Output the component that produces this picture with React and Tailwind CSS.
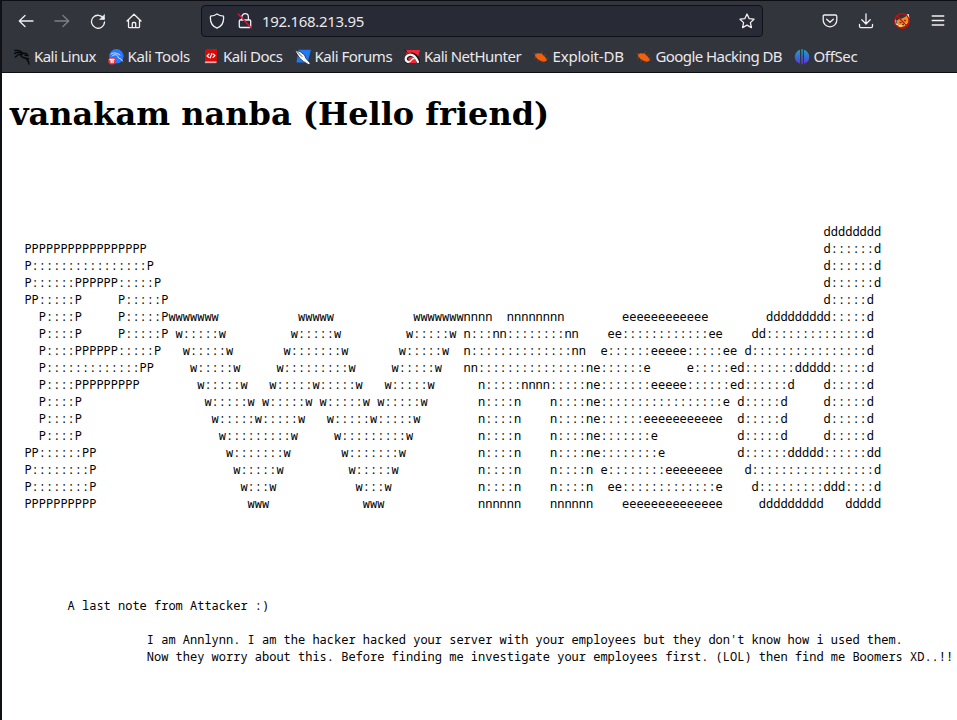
const FONT = "font-['Noto_Sans','Open_Sans',sans-serif]";

// Each banner row is a list of [column, text] runs.
const banner = [
  [[113, "dddddddd"]],
  [[2, "PPPPPPPPPPPPPPPPP"], [113, "d::::::d"]],
  [[2, "P::::::::::::::::P"], [113, "d::::::d"]],
  [[2, "P::::::PPPPPP:::::P"], [113, "d::::::d"]],
  [[2, "PP:::::P"], [15, "P:::::P"], [113, "d:::::d"]],
  [[4, "P::::P"], [15, "P:::::P"], [22, "wwwwwww"], [40, "wwwww"], [56, "wwwwwwwnnnn"], [69, "nnnnnnnn"], [85, "eeeeeeeeeeee"], [105, "ddddddddd:::::d"]],
  [[4, "P::::P"], [15, "P:::::P"], [23, "w:::::w"], [39, "w:::::w"], [55, "w:::::w"], [63, "n:::nn::::::::nn"], [83, "ee::::::::::::ee"], [103, "dd::::::::::::::d"]],
  [[4, "P::::PPPPPP:::::P"], [24, "w:::::w"], [38, "w:::::::w"], [54, "w:::::w"], [63, "n::::::::::::::nn"], [82, "e::::::eeeee:::::ee"], [102, "d::::::::::::::::d"]],
  [[4, "P:::::::::::::PP"], [25, "w:::::w"], [37, "w:::::::::w"], [53, "w:::::w"], [63, "nn:::::::::::::::n"], [81, "e::::::e"], [94, "e:::::e"], [101, "d:::::::ddddd:::::d"]],
  [[4, "P::::PPPPPPPPP"], [26, "w:::::w"], [36, "w:::::w:::::w"], [52, "w:::::w"], [65, "n:::::nnnn:::::n"], [81, "e:::::::eeeee::::::e"], [101, "d::::::d"], [113, "d:::::d"]],
  [[4, "P::::P"], [27, "w:::::w"], [35, "w:::::w"], [43, "w:::::w"], [51, "w:::::w"], [65, "n::::n"], [75, "n::::n"], [81, "e:::::::::::::::::e"], [101, "d:::::d"], [113, "d:::::d"]],
  [[4, "P::::P"], [28, "w:::::w:::::w"], [44, "w:::::w:::::w"], [65, "n::::n"], [75, "n::::n"], [81, "e::::::eeeeeeeeeee"], [101, "d:::::d"], [113, "d:::::d"]],
  [[4, "P::::P"], [29, "w:::::::::w"], [45, "w:::::::::w"], [65, "n::::n"], [75, "n::::n"], [81, "e:::::::e"], [101, "d:::::d"], [113, "d:::::d"]],
  [[2, "PP::::::PP"], [30, "w:::::::w"], [46, "w:::::::w"], [65, "n::::n"], [75, "n::::n"], [81, "e::::::::e"], [101, "d::::::ddddd::::::dd"]],
  [[2, "P::::::::P"], [31, "w:::::w"], [47, "w:::::w"], [65, "n::::n"], [75, "n::::n"], [82, "e::::::::eeeeeeee"], [102, "d:::::::::::::::::d"]],
  [[2, "P::::::::P"], [32, "w:::w"], [48, "w:::w"], [65, "n::::n"], [75, "n::::n"], [83, "ee:::::::::::::e"], [103, "d:::::::::ddd::::d"]],
  [[2, "PPPPPPPPPP"], [33, "www"], [49, "www"], [65, "nnnnnn"], [75, "nnnnnn"], [85, "eeeeeeeeeeeeee"], [104, "ddddddddd"], [116, "ddddd"]],
  [], [], [], [], [],
  [[8, "A last note from Attacker :)"]],
  [],
  [[19, "I am Annlynn. I am the hacker hacked your server with your employees but they don't know how i used them."]],
  [[19, "Now they worry about this. Before finding me investigate your employees first. (LOL) then find me Boomers XD..!!"]],
];

const bannerText = banner
  .map((runs) => runs.reduce((line, [col, text]) => line.padEnd(col) + text, ""))
  .join("\n");

function Glyph({ children, className = "" }) {
  return (
    <svg viewBox="0 0 16 16" fill="none" stroke="#f0f0f2" strokeWidth="1.3" strokeLinecap="round" strokeLinejoin="round" className={`size-4 shrink-0 ${className}`}>
      {children}
    </svg>
  );
}

function Bug() {
  return (
    <g stroke="none">
      <path d="M2 5.2 4.5 4.2 7 4.6 8.5 4.2 10 6 12.6 8.4 14 11.5 11 12.8 8 12 4.5 10 2.2 7.5Z" fill="#f1600d" />
      <path d="M3 5 .8 4.6M3.5 8.5 1.5 9.5M6 11 4.8 12.5M8 4.5 9.5 2.6M10.5 6.5 13 5.5M12.5 9 15 9.3M9.5 12 9.2 13.5" stroke="#8a4524" strokeWidth=".7" />
    </g>
  );
}

const bookmarks = [
  {
    name: "Kali Linux", w: "w-[93.5px]", tw: "tracking-[-0.56px]",
    icon: <g stroke="#08090b" strokeWidth="1.4"><path d="M.8 1.5C4 1 7 2 9 4.5M.5 4.6C3 3 6 3.5 8.5 5M1.5 8C3 6 5 5 8 5.5M8 4 12 4.5 14 6.5 11 6.3M8.5 4.5C5.5 7 8 8.5 11 9 13.5 10 14.5 12 15 15M12 9.5 14.5 9.8" /></g>,
  },
  {
    name: "Kali Tools", w: "w-[95.5px]", tw: "tracking-[-0.35px]",
    icon: <g stroke="none"><circle cx="8.4" cy="7.3" r="7.2" fill="#2777ff" /><path d="M3 5C6 3 9 4 12 6M4 7C7 4.5 10 6 10 8S14 9 14.5 12" stroke="#d8e8ff" strokeWidth="1" /><circle cx="4" cy="11.8" r="3.8" fill="#ed3038" /><path d="M2 10.5h4M3.2 10.5v3M5 10.5v3" stroke="#fff" /></g>,
  },
  {
    name: "Kali Docs", w: "w-[91.5px]", tw: "tracking-[-0.48px]",
    icon: <g stroke="none"><path d="M2 1.5 4 0h10v12.5l-1 2.5H2Z" fill="#dc0909" /><path d="M2.5 13.2H13" stroke="#ddd" strokeWidth="1.3" /><path d="m6 5-2 2 2 1.5M10 5l2 1.5-2 2M8.8 4.5 7.2 9" stroke="#fff" strokeWidth="1.1" /></g>,
  },
  {
    name: "Kali Forums", w: "w-[109.5px]", tw: "tracking-[-0.48px]",
    icon: <g stroke="none"><path d="M3.5.8H16L12.6 13.5H1.5Z" fill="#1f78f5" /><path d="M0 1.5 5 2.5 9.5 6 11 9.5 15.5 14.5 13.5 15.5 8.5 12.5 5 9.5Z" fill="#f5f7fa" stroke="#17202c" strokeWidth=".7" /><path d="m2 2.5 5 5" stroke="#30363f" strokeWidth=".8" /></g>,
  },
  {
    name: "Kali NetHunter", w: "w-[128.5px]", tw: "tracking-[-0.52px]",
    icon: <g stroke="none"><path d="M2.5 1H16l-3.8 13H2Z" fill="#f32636" /><path d="M.8 1 3 3.2" stroke="#141418" strokeWidth="1" /><path d="M3 12.6C.5 9 3.5 5.8 7.5 5.6c3.6 0 5.4 2.6 7 7.2" stroke="#17171b" strokeWidth="4" /><path d="M4 12.8C.6 11.8 1 7 5 5.8c4.6-1 6.8 2 9 7.2" stroke="#f3f3f3" strokeWidth="2.3" /><path d="M4 13c3.6.3 3-3.6 6-3.6" stroke="#f3f3f3" strokeWidth="1.5" /></g>,
  },
  { name: "Exploit-DB", w: "w-[103px]", tw: "tracking-[-0.2px]", icon: <Bug /> },
  { name: "Google Hacking DB", w: "w-[158px]", tw: "tracking-[-0.57px]", icon: <Bug /> },
  {
    name: "OffSec", w: "w-[70px]", tw: "tracking-[-0.35px]",
    icon: <g stroke="none"><defs><linearGradient id="off" x1="0" y1="0" x2="0" y2="1"><stop stopColor="#12a8bd" /><stop offset="1" stopColor="#6230e8" /></linearGradient></defs><path d="M6 .8A7.5 7.5 0 0 0 2.8 13L6 14.8ZM7.3.3h1.5v15H7.3ZM10 .8A7.5 7.5 0 0 1 13.3 13L10 14.8Z" fill="url(#off)" /></g>,
  },
];

export default function App() {
  return (
    <div className="h-[720px] w-[957px] overflow-hidden border-l-2 border-[#101116] bg-white text-black">
      <header className={`h-[73px] border-y border-[#0d0e13] bg-[#33353d] text-[#e9e9eb] ${FONT}`}>
        <div className="flex h-10 items-center">
          <div className="ml-4 flex gap-5">
            <Glyph><path d="M1.3 8H15M7 2.5 1.3 8 7 13.5" /></Glyph>
            <Glyph className="opacity-40"><path d="M1 8h13.7M9 2.5 14.7 8 9 13.5" /></Glyph>
            <Glyph><path d="M13.7 5.6A6.5 6.5 0 1 0 14.5 9" /><path d="M14.5 1.8v4.7H9.8Z" fill="#f0f0f2" strokeWidth=".6" /></Glyph>
            <Glyph><path d="M1 8 8 1.2 15 8M2.5 7v6.7q0 1 1 1h9q1 0 1-1V7M6.3 14.5v-4q0-1 1-1h1.4q1 0 1 1v4" /></Glyph>
          </div>
          <div className="ml-[59px] flex h-8 w-[562px] items-center rounded border border-[#101117] bg-[#282a36] pr-[7px] pl-[7px]">
            <Glyph><path d="M8 1C6 2.5 4 3 1.5 3.2 1 8 2.5 13 8 15.2 13.5 13 15 8 14.5 3.2 12 3 10 2.5 8 1Z" /></Glyph>
            <Glyph className="ml-3"><path d="M4.8 7V4a3.3 3.3 0 0 1 6.6 0v3M3.3 7h9.4q1 0 1 1v5.5q0 1-1 1H3.3q-1 0-1-1V8q0-1 1-1Z" /><path d="m1.3 1 13 14" stroke="#e3113d" /></Glyph>
            <span className="ml-[9px] flex-1 text-[15px] tracking-[-0.32px]">192.168.213.95</span>
            <Glyph><path d="m8 1 2.1 4.6 4.9.6-3.6 3.4 1 5L8 12.1l-4.4 2.5 1-5L1 6.2l4.9-.6Z" /></Glyph>
          </div>
          <div className="ml-[59px] flex items-center gap-5">
            <Glyph><path d="M2.5 2h11q1.3 0 1.3 1.3v4A6.8 6.5 0 0 1 1.2 7.3v-4Q1.2 2 2.5 2ZM4.7 6.2 8 9.3l3.3-3.1" /></Glyph>
            <Glyph><path d="M8 .8v10M3.8 6.8 8 11l4.2-4.2M1.5 11.5v1.8q0 1.3 1.3 1.3h10.4q1.3 0 1.3-1.3v-1.8" /></Glyph>
            <Glyph><path d="M2.5 8 5 6 8 5.5 11 4 13 2.5 14.5 5 14.5 9 11.5 13 7 14.5 4 13Z" fill="#f0901c" stroke="none" /><path d="M1.5 7v4l2 .5M12.5 2.5l1.7-.8.5 3" stroke="#eee" /><path d="m5 13 3-.5M10 11.5l2-1" stroke="#f3e6d2" /><path d="M6 9.5h1M10.5 7.5h1M8.5 11.5h1" stroke="#79340c" /><circle cx="8" cy="8" r="7.3" stroke="#d40a0a" /><path d="m3 3 10 10" stroke="#d40a0a" /></Glyph>
            <Glyph><path d="M2.2 3h11.6M2.2 7.5h11.6M2.2 12h11.6" /></Glyph>
          </div>
        </div>
        <nav className="flex h-[31px] items-center pl-3">
          {bookmarks.map((b) => (
            <div key={b.name} className={`flex shrink-0 items-center gap-1 ${b.w}`}>
              <Glyph>{b.icon}</Glyph>
              <span className={`pb-0.5 text-[15px] leading-5 whitespace-nowrap ${b.tw}`}>{b.name}</span>
            </div>
          ))}
        </nav>
      </header>
      <main className="pl-2">
        <h1 className="pt-[22px] font-['DejaVu_Serif',serif] text-[32px] leading-[38px] font-bold">vanakam nanba (Hello friend)</h1>
        <pre className="mt-[90px] font-['Noto_Sans_Mono','DejaVu_Sans_Mono',monospace] text-[12px] leading-[17px]">{bannerText}</pre>
      </main>
    </div>
  );
}
